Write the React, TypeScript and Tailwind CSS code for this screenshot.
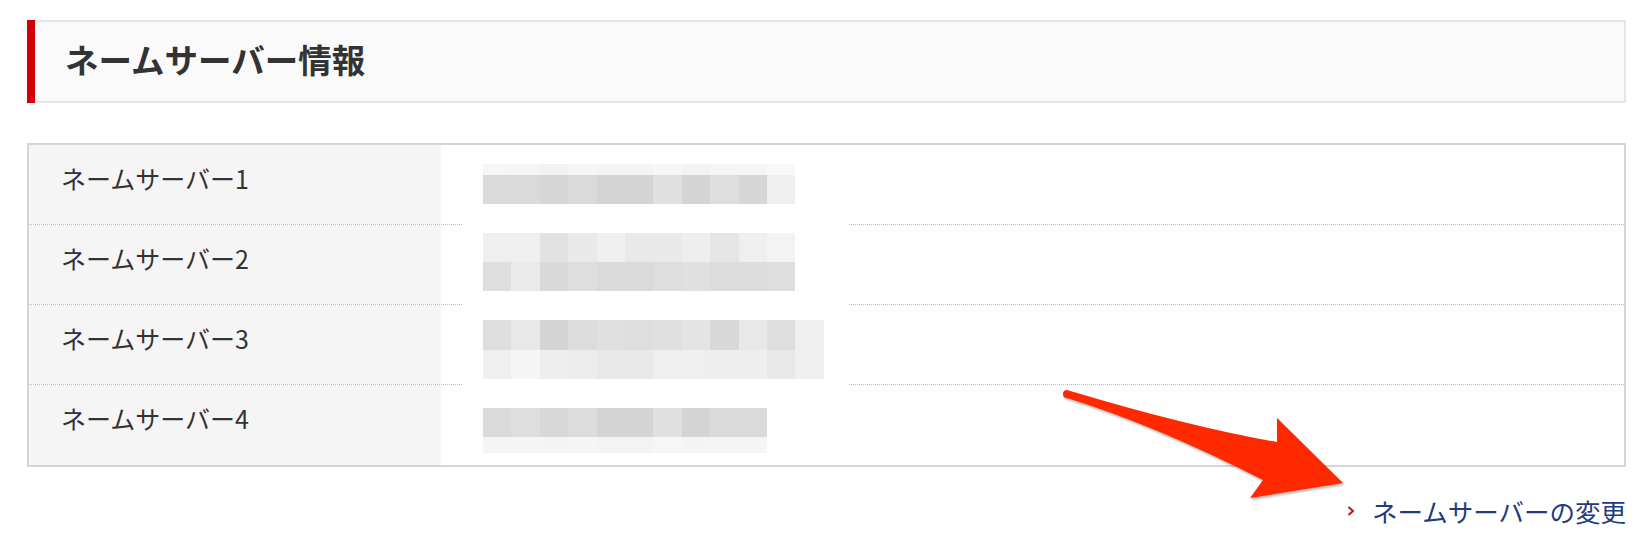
import React from 'react';

const font = { fontFamily: '"Noto Sans CJK JP", "Noto Sans", sans-serif' };

// pixelated (blurred) name server values, one band per 29px
const blur: { h: number; c: string[] }[] = [
  { h: 11, c: ['#f6f6f6', '#f5f5f5', '#f2f2f2', '#f5f5f5', '#f4f4f4', '#f4f4f4', '#f7f7f7', '#f3f3f3', '#f5f5f5', '#f5f5f5', '#f8f8f8'] },
  { h: 29, c: ['#dadada', '#dadada', '#d6d6d6', '#dadada', '#d4d4d4', '#d4d4d4', '#e0e0e0', '#d4d4d4', '#dedede', '#d6d6d6', '#efefef'] },
  { h: 29, c: [] },
  { h: 29, c: ['#efefef', '#efefef', '#e2e2e2', '#e9e9e9', '#f0f0f0', '#e9e9e9', '#e9e9e9', '#eeeeee', '#e5e5e5', '#efefef', '#f3f3f3'] },
  { h: 29, c: ['#dedede', '#eaeaea', '#d9d9d9', '#dedede', '#dadada', '#dadada', '#dedede', '#e0e0e0', '#dcdcdc', '#dcdcdc', '#dedede'] },
  { h: 29, c: [] },
  { h: 30, c: ['#dedede', '#e8e8e8', '#d4d4d4', '#dcdcdc', '#e0e0e0', '#dedede', '#e0e0e0', '#e4e4e4', '#d8d8d8', '#e8e8e8', '#dedede', '#efefef'] },
  { h: 29, c: ['#efefef', '#f5f5f5', '#eeeeee', '#ececec', '#e8e8e8', '#e8e8e8', '#efefef', '#efefef', '#eeeeee', '#eeeeee', '#e8e8e8', '#f0f0f0'] },
  { h: 29, c: [] },
  { h: 29, c: ['#dadada', '#dedede', '#d8d8d8', '#dcdcdc', '#d4d4d4', '#d4d4d4', '#e0e0e0', '#d4d4d4', '#dadada', '#dadada'] },
  { h: 16, c: ['#f5f5f5', '#f5f5f5', '#f4f4f4', '#f5f5f5', '#f3f3f3', '#f3f3f3', '#f6f6f6', '#f4f4f4', '#f5f5f5', '#f5f5f5'] },
];

const rows = ['ネームサーバー1', 'ネームサーバー2', 'ネームサーバー3', 'ネームサーバー4'];

export default function App() {
  return (
    <div className="relative w-full h-[554px] bg-white pt-[20px] pl-[27px]" style={font}>
      <div className="w-[1599px]">
        {/* heading */}
        <div className="flex h-[83px]">
          <div className="w-[8px] bg-[#d0000b]" />
          <div className="flex-1 flex items-center pl-[30px] pb-[4px] bg-[#fafafa] border-2 border-l-0 border-[#e6e6e6]">
            <h2 className="text-[33.5px] font-bold text-[#333333]">ネームサーバー情報</h2>
          </div>
        </div>

        {/* table */}
        <div className="relative mt-[40px] border-2 border-[#d5d5d5]">
          {rows.map((label, i) => (
            <div
              key={i}
              className={`flex h-[80px] ${i < rows.length - 1 ? 'border-b border-dotted border-[#bdbdbd]' : ''}`}
            >
              <div className="w-[412px] bg-[#f5f5f5] flex items-center pl-[32px] pb-[12px]">
                <span className="text-[25px] text-[#333333]">{label}</span>
              </div>
              <div className="flex-1" />
            </div>
          ))}

          <div className="absolute left-[433px] top-[12px] w-[386px] h-[298px] bg-white pl-[21px] pt-[7px] flex flex-col">
            {blur.map((b, i) => (
              <div key={i} className="flex" style={{ height: b.h }}>
                {b.c.map((c, j) => (
                  <div key={j} className="w-[28.4px] h-full" style={{ background: c }} />
                ))}
              </div>
            ))}
          </div>
        </div>

        {/* link */}
        <div className="flex justify-end items-center mt-[26px] h-[36px]">
          <svg width="8" height="10" viewBox="0 0 8 10" className="mr-[17px]">
            <polyline points="1.5,1 6,5 1.5,9" fill="none" stroke="#c0141c" strokeWidth="2" />
          </svg>
          <span className="text-[25.5px] text-[#213b7c]">ネームサーバーの変更</span>
        </div>
      </div>

      {/* annotation arrow */}
      <svg
        width="310"
        height="130"
        viewBox="0 0 310 130"
        className="absolute left-[1050px] top-[380px] drop-shadow-[1px_2px_1px_rgba(0,0,0,0.3)]"
      >
        <path
          d="M17,10 Q140,47 227,62 L227,38 L293,103 L200,118 L213,100 Q105,45 17,18 A4,4 0 0 1 17,10 Z"
          fill="#ff2900"
        />
      </svg>
    </div>
  );
}
